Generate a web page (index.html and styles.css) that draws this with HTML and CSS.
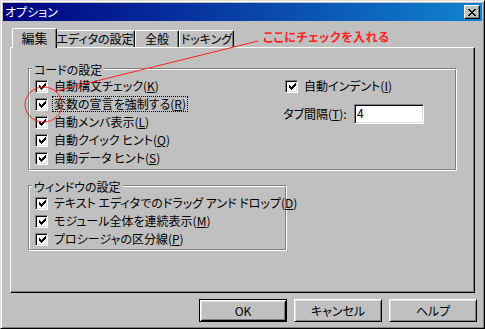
FILE: index.html
```html
<!DOCTYPE html>
<html lang="ja">
<head>
  <meta charset="UTF-8" />
  <title>オプション</title>
  <link rel="stylesheet" href="styles.css">
</head>
<body>
  <div class="window">
    <div class="titlebar">
      <span class="title">オプション</span>
      <span class="close-btn">
        <svg width="8" height="7" viewBox="0 0 8 7" shape-rendering="crispEdges">
          <path d="M0 0h2v1H0z M6 0h2v1H6z M1 1h2v1H1z M5 1h2v1H5z M2 2h4v1H2z M3 3h2v1H3z M2 4h4v1H2z M1 5h2v1H1z M5 5h2v1H5z M0 6h2v1H0z M6 6h2v1H6z" fill="#000"/>
        </svg>
      </span>
    </div>

    <div class="content">
      <div class="tabs">
        <div class="tab tab-edit active">編集</div>
        <div class="tab tab-editor">エディタの設定</div>
        <div class="tab tab-general">全般</div>
        <div class="tab tab-docking">ドッキング</div>
      </div>

      <div class="panel">
        <div class="group group-code">
          <div class="group-inner">
            <div class="legend">コードの設定</div>
            <div class="code-cols">
              <div class="col">
                <label class="check-row"><span class="checkbox"><svg width="7" height="7" viewBox="0 0 7 7" shape-rendering="crispEdges"><path d="M0 2h1v3H0z M1 3h1v3H1z M2 4h1v3H2z M3 3h1v3H3z M4 2h1v3H4z M5 1h1v3H5z M6 0h1v3H6z"/></svg></span><span class="check-label">自動構文チェック(<u>K</u>)</span></label>
                <label class="check-row"><span class="checkbox"><svg width="7" height="7" viewBox="0 0 7 7" shape-rendering="crispEdges"><path d="M0 2h1v3H0z M1 3h1v3H1z M2 4h1v3H2z M3 3h1v3H3z M4 2h1v3H4z M5 1h1v3H5z M6 0h1v3H6z"/></svg></span><span class="check-label focus">変数の宣言を強制する(<u>R</u>)</span></label>
                <label class="check-row"><span class="checkbox"><svg width="7" height="7" viewBox="0 0 7 7" shape-rendering="crispEdges"><path d="M0 2h1v3H0z M1 3h1v3H1z M2 4h1v3H2z M3 3h1v3H3z M4 2h1v3H4z M5 1h1v3H5z M6 0h1v3H6z"/></svg></span><span class="check-label">自動メンバ表示(<u>L</u>)</span></label>
                <label class="check-row"><span class="checkbox"><svg width="7" height="7" viewBox="0 0 7 7" shape-rendering="crispEdges"><path d="M0 2h1v3H0z M1 3h1v3H1z M2 4h1v3H2z M3 3h1v3H3z M4 2h1v3H4z M5 1h1v3H5z M6 0h1v3H6z"/></svg></span><span class="check-label">自動クイック ヒント(<u>Q</u>)</span></label>
                <label class="check-row"><span class="checkbox"><svg width="7" height="7" viewBox="0 0 7 7" shape-rendering="crispEdges"><path d="M0 2h1v3H0z M1 3h1v3H1z M2 4h1v3H2z M3 3h1v3H3z M4 2h1v3H4z M5 1h1v3H5z M6 0h1v3H6z"/></svg></span><span class="check-label">自動データ ヒント(<u>S</u>)</span></label>
              </div>
              <div class="col col-right">
                <label class="check-row indent-row"><span class="checkbox"><svg width="7" height="7" viewBox="0 0 7 7" shape-rendering="crispEdges"><path d="M0 2h1v3H0z M1 3h1v3H1z M2 4h1v3H2z M3 3h1v3H3z M4 2h1v3H4z M5 1h1v3H5z M6 0h1v3H6z"/></svg></span><span class="check-label">自動インデント(<u>I</u>)</span></label>
                <div class="field-row">
                  <span class="field-label">タブ間隔(<u>T</u>):</span>
                  <span class="textbox">4</span>
                </div>
              </div>
            </div>
          </div>
        </div>

        <div class="group group-window">
          <div class="group-inner">
            <div class="legend">ウィンドウの設定</div>
            <div class="col">
              <label class="check-row"><span class="checkbox"><svg width="7" height="7" viewBox="0 0 7 7" shape-rendering="crispEdges"><path d="M0 2h1v3H0z M1 3h1v3H1z M2 4h1v3H2z M3 3h1v3H3z M4 2h1v3H4z M5 1h1v3H5z M6 0h1v3H6z"/></svg></span><span class="check-label">テキスト エディタでのドラッグ アンド ドロップ(<u>D</u>)</span></label>
              <label class="check-row"><span class="checkbox"><svg width="7" height="7" viewBox="0 0 7 7" shape-rendering="crispEdges"><path d="M0 2h1v3H0z M1 3h1v3H1z M2 4h1v3H2z M3 3h1v3H3z M4 2h1v3H4z M5 1h1v3H5z M6 0h1v3H6z"/></svg></span><span class="check-label">モジュール全体を連続表示(<u>M</u>)</span></label>
              <label class="check-row"><span class="checkbox"><svg width="7" height="7" viewBox="0 0 7 7" shape-rendering="crispEdges"><path d="M0 2h1v3H0z M1 3h1v3H1z M2 4h1v3H2z M3 3h1v3H3z M4 2h1v3H4z M5 1h1v3H5z M6 0h1v3H6z"/></svg></span><span class="check-label">プロシージャの区分線(<u>P</u>)</span></label>
            </div>
          </div>
        </div>
      </div>

      <div class="buttons">
        <span class="btn default">OK</span>
        <span class="btn">キャンセル</span>
        <span class="btn">ヘルプ</span>
      </div>
    </div>

    <!-- red annotation drawn over the dialog -->
    <svg class="annotation" width="485" height="329" viewBox="0 0 485 329">
      <line x1="258" y1="41" x2="56" y2="91" stroke="#f22" stroke-width="1"/>
      <ellipse cx="43.5" cy="104.5" rx="18.5" ry="17.5" fill="none" stroke="#f22" stroke-width="1"/>
    </svg>
    <div class="note">ここにチェックを入れる</div>
  </div>
</body>
</html>
```

FILE: styles.css
```css
body {
  margin: 0;
  background: #c0c0c0;
  font-family: "Noto Sans CJK JP", "Noto Sans", sans-serif;
  font-size: 12px;
  line-height: 14px;
  font-feature-settings: "palt";
  color: #000;
}

.window {
  position: relative;
  width: 485px;
  height: 329px;
  box-sizing: border-box;
  padding: 2px;
  background: #c0c0c0;
  border: 1px solid;
  border-color: #dfdfdf #000 #000 #dfdfdf;
  box-shadow: inset 1px 1px #fff, inset -1px -1px #808080;
  display: flex;
  flex-direction: column;
}

/* title bar */
.titlebar {
  height: 18px;
  flex-shrink: 0;
  display: flex;
  align-items: center;
  justify-content: space-between;
  padding: 0 2px 0 2px;
  background: linear-gradient(to right, #000080, #1084d0);
}

.title {
  color: #fff;
  font-size: 12px;
  line-height: 18px;
}

.close-btn {
  width: 16px;
  height: 14px;
  box-sizing: border-box;
  display: flex;
  align-items: center;
  justify-content: center;
  background: #c0c0c0;
  border: 1px solid;
  border-color: #fff #000 #000 #fff;
  box-shadow: inset -1px -1px #808080;
}

/* tabs */
.content {
  flex: 1;
  display: flex;
  flex-direction: column;
}

.tabs {
  display: flex;
  align-items: flex-end;
  height: 19px;
  margin: 7px 7px 0 9px;
}

.tab {
  height: 17px;
  box-sizing: border-box;
  display: flex;
  align-items: center;
  justify-content: center;
  border-top: 1px solid #fff;
  border-left: 1px solid #fff;
  border-right: 1px solid #000;
  border-radius: 2px 2px 0 0;
  box-shadow: inset -1px 0 #808080;
  background: #c0c0c0;
  font-size: 12px;
  white-space: nowrap;
}

.tab-edit { width: 41px; }
.tab-editor { width: 80px; }
.tab-general { width: 44px; }
.tab-docking { width: 55px; }

.tab.active {
  position: relative;
  z-index: 1;
  width: 45px;
  height: 20px;
  margin: 0 -2px -1px 0;
  padding-bottom: 2px;
  font-size: 13px;
}

/* panel */
.panel {
  height: 246px;
  box-sizing: border-box;
  margin: 0 7px 0 7px;
  padding: 20px 0 0 17px;
  border: 1px solid;
  border-color: #fff #000 #000 #fff;
  box-shadow: inset -1px -1px #808080;
}

.group {
  border: 1px solid;
  border-color: #808080 #fff #fff #808080;
}

.group-inner {
  display: flex;
  flex-direction: column;
  border: 1px solid;
  border-color: #fff #808080 #808080 #fff;
  padding: 0 0 1px 5px;
}

.group-code { width: 429px; box-sizing: border-box; }
.group-code .group-inner { padding-bottom: 2px; }

.group-window {
  width: 259px;
  box-sizing: border-box;
  margin-top: 14px;
}

.legend {
  align-self: flex-start;
  margin: -7px 0 0 -3px;
  padding: 0 2px;
  height: 14px;
  line-height: 14px;
  background: #c0c0c0;
}

.code-cols {
  display: grid;
  grid-template-columns: 248px 1fr;
}

.check-row {
  display: flex;
  align-items: center;
  height: 18px;
  white-space: nowrap;
}

.checkbox {
  width: 13px;
  height: 13px;
  box-sizing: border-box;
  flex-shrink: 0;
  display: flex;
  align-items: center;
  justify-content: center;
  background: #fff;
  border: 1px solid;
  border-color: #808080 #fff #fff #808080;
  box-shadow: inset 1px 1px #000, inset -1px -1px #dfdfdf;
  margin-right: 5px;
}

.checkbox svg {
  margin: 1px 0 0 1px;
}

.check-label {
  line-height: 14px;
  padding: 0 1px;
}

.check-label.focus {
  outline: 1px dotted #000;
  outline-offset: 0;
}

.indent-row {
  padding-left: 2px;
}

.field-row {
  display: flex;
  align-items: center;
  margin-top: 9px;
}

.field-label {
  width: 71px;
}

.textbox {
  width: 70px;
  height: 20px;
  box-sizing: border-box;
  padding: 0 2px;
  line-height: 16px;
  background: #fff;
  border: 1px solid;
  border-color: #808080 #fff #fff #808080;
  box-shadow: inset 1px 1px #000, inset -1px -1px #dfdfdf;
}

/* bottom buttons */
.buttons {
  display: flex;
  justify-content: flex-end;
  gap: 7px;
  margin: 6px 5px 0 0;
}

.btn {
  width: 88px;
  height: 23px;
  box-sizing: border-box;
  display: flex;
  align-items: center;
  justify-content: center;
  background: #c0c0c0;
  border: 1px solid;
  border-color: #fff #000 #000 #fff;
  box-shadow: inset 1px 1px #dfdfdf, inset -1px -1px #808080;
}

.btn.default {
  border: 1px solid #000;
  box-shadow: inset 1px 1px #fff, inset -1px -1px #000, inset 2px 2px #dfdfdf, inset -2px -2px #808080;
}

/* annotation */
.annotation {
  position: absolute;
  left: -1px;
  top: -1px;
  pointer-events: none;
}

.note {
  position: absolute;
  left: 262px;
  top: 29px;
  color: #f22;
  font-weight: bold;
  font-size: 12px;
  letter-spacing: 0.5px;
}
```
